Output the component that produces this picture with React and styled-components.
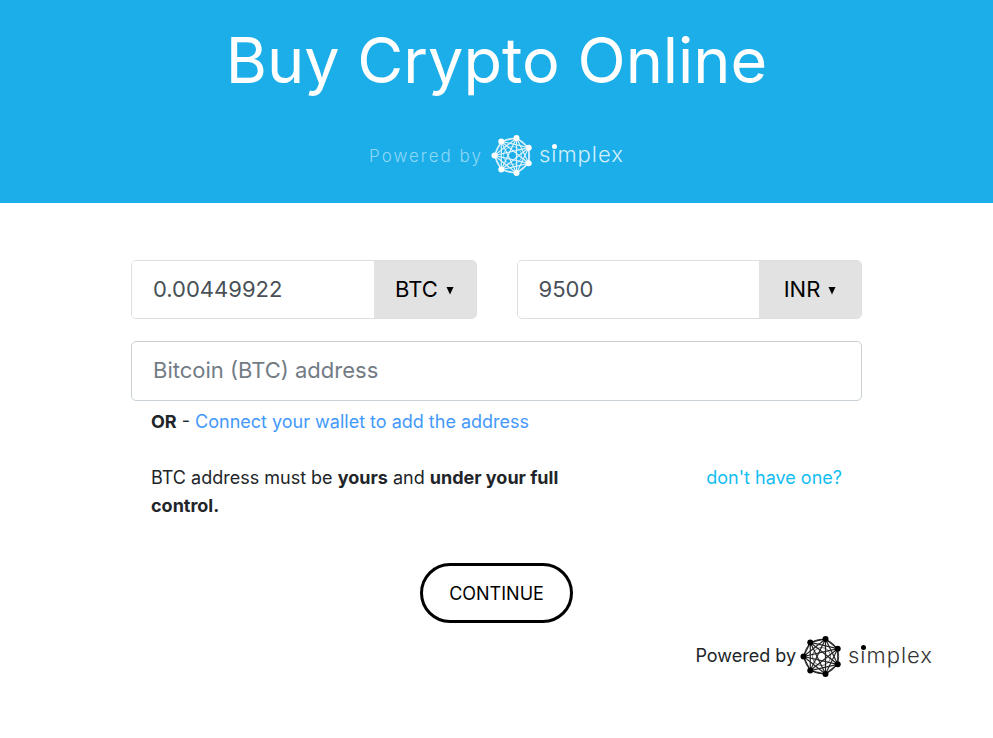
import React, { useState } from "react";
import styled, { createGlobalStyle } from "styled-components";

const GlobalStyle = createGlobalStyle`
  *, *::before, *::after { box-sizing: border-box; }
  body {
    margin: 0;
    background: #fff;
    color: #212529;
    font-family: Inter, "Liberation Sans", sans-serif;
    font-size: 18px;
    line-height: 28px;
  }
`;

const Header = styled.header`
  display: flex;
  flex-direction: column;
  align-items: center;
  gap: 32px;
  padding: 18px 20px 26px;
  background: #1caee9;
  color: #fff;
`;

const Title = styled.h1`
  margin: 0;
  font-size: 63px;
  font-weight: 400;
  line-height: 84px;
  text-align: center;
`;

const Powered = styled.div`
  display: flex;
  align-items: center;
  gap: 8px;
  color: #8ed8f6;
  font-size: 17px;
  font-weight: 300;
  letter-spacing: 2px;
`;

const FooterPowered = styled.footer`
  display: flex;
  align-items: center;
  justify-content: flex-end;
  gap: 4px;
  padding: 12px 60px 40px;
`;

const PoweredLabel = styled.span`
  padding-bottom: 2px;
`;

const Logo = styled.span`
  display: inline-flex;
  align-items: center;
  gap: 5px;
  color: ${(p) => (p.$light ? "#fff" : "#000")};
`;

const Mark = styled.svg`
  display: block;
  width: 43px;
  height: 43px;
`;

const Wordmark = styled.span`
  position: relative;
  padding-bottom: 4px;
  color: ${(p) => (p.$light ? "#d3f0fc" : "#333")};
  font-family: Inter, sans-serif;
  font-size: 22px;
  font-weight: 300;
  line-height: 28px;
  letter-spacing: 1px;

  &::before {
    content: "";
    position: absolute;
    top: 4px;
    left: 13px;
    width: 5px;
    height: 5px;
    border-radius: 50%;
    background: ${(p) => (p.$light ? "#fff" : "#000")};
  }
`;

const Form = styled.form`
  display: flex;
  flex-direction: column;
  max-width: 771px;
  margin: 0 auto;
  padding: 57px 20px 0;
`;

const Amounts = styled.div`
  display: grid;
  grid-template-columns: 1fr 1fr;
  gap: 40px;
  margin-bottom: 22px;
`;

const Group = styled.div`
  display: flex;
  height: 59px;
  overflow: hidden;
  border: 1px solid #dfdfdf;
  border-radius: 5px;
`;

const AmountInput = styled.input`
  flex: 1;
  min-width: 0;
  padding: 0 21px 2px;
  border: 0;
  background: #fff;
  color: #495057;
  font: 400 22px Inter, sans-serif;
`;

const Picker = styled.div`
  display: flex;
  flex: 0 0 102px;
  justify-content: center;
  background: #e2e2e2;
`;

const SelectWrap = styled.div`
  position: relative;
`;

const CurrencySelect = styled.select`
  field-sizing: content;
  height: 100%;
  padding: 0 16px 2px 0;
  border: 0;
  appearance: none;
  background: transparent;
  color: #000;
  font: 400 22px Inter, sans-serif;
`;

const Caret = styled.svg`
  position: absolute;
  top: 26px;
  right: 0;
  width: 8px;
  height: 8px;
  pointer-events: none;
`;

const AddressInput = styled.input`
  height: 60px;
  padding: 0 21px 2px;
  border: 1px solid #c8d0d6;
  border-radius: 5px;
  background: #fff;
  color: #495057;
  font: 400 22px Inter, sans-serif;

  &::placeholder { color: #737c85; opacity: 1; }
`;

const Connect = styled.p`
  margin: 7px 20px 28px;
`;

const TextLink = styled.a`
  color: ${(p) => (p.$cyan ? "#12bdf2" : "#4399fb")};
  text-decoration: none;
`;

const Notice = styled.div`
  display: flex;
  justify-content: space-between;
  gap: 40px;
  padding: 0 20px;
`;

const NoticeText = styled.p`
  flex: 0 1 440px;
  margin: 0;
`;

const Strong = styled.strong`
  font-weight: 700;
`;

const Continue = styled.button`
  align-self: center;
  height: 60px;
  margin-top: 43px;
  padding: 0 26px;
  border: 3px solid #000;
  border-radius: 30px;
  background: #fff;
  color: #000;
  font: 400 18px Inter, sans-serif;
`;

const nodes = Array.from({ length: 7 }, (_, i) => {
  const a = Math.PI + (i * 2 * Math.PI) / 7;
  return [21.5 + 18 * Math.cos(a), 21.5 + 18 * Math.sin(a)];
});

const chords = nodes.flatMap((a, i) => nodes.slice(i + 1).map((b) => [a, b]));

function SimplexLogo({ light }) {
  return (
    <Logo $light={light}>
      <Mark viewBox="0 0 43 43" aria-hidden="true">
        <g stroke="currentColor" strokeWidth="1.2" opacity="0.85">
          {chords.map(([a, b], i) => (
            <line key={i} x1={a[0]} y1={a[1]} x2={b[0]} y2={b[1]} />
          ))}
        </g>
        <circle cx="21.5" cy="21.5" r="17.2" fill="none" stroke="currentColor" strokeWidth="0.9" opacity="0.8" />
        <circle cx="21.5" cy="21.5" r="9" fill="none" stroke="currentColor" strokeWidth="0.8" opacity="0.7" />
        {nodes.map(([x, y], i) => (
          <circle key={i} cx={x} cy={y} r="3" fill="currentColor" />
        ))}
      </Mark>
      <Wordmark $light={light}>simplex</Wordmark>
    </Logo>
  );
}

function Amount({ label, initial, currencies }) {
  const [value, setValue] = useState(initial);
  return (
    <Group>
      <AmountInput aria-label={label} value={value} onChange={(e) => setValue(e.target.value)} />
      <Picker>
        <SelectWrap>
          <CurrencySelect aria-label={`${label} currency`} defaultValue={currencies[0]}>
            {currencies.map((c) => (
              <option key={c}>{c}</option>
            ))}
          </CurrencySelect>
          <Caret viewBox="0 0 8 8" aria-hidden="true">
            <path d="M0.5 0H7.5L4 7.5Z" fill="#000" />
          </Caret>
        </SelectWrap>
      </Picker>
    </Group>
  );
}

export default function App() {
  return (
    <>
      <GlobalStyle />
      <Header>
        <Title>Buy Crypto Online</Title>
        <Powered>
          <span>Powered by</span>
          <SimplexLogo light />
        </Powered>
      </Header>
      <main>
        <Form onSubmit={(e) => e.preventDefault()}>
          <Amounts>
            <Amount label="Crypto amount" initial="0.00449922" currencies={["BTC"]} />
            <Amount label="Fiat amount" initial="9500" currencies={["INR"]} />
          </Amounts>
          <AddressInput aria-label="Bitcoin (BTC) address" placeholder="Bitcoin (BTC) address" />
          <Connect>
            <Strong>OR</Strong> - <TextLink href="#connect">Connect your wallet to add the address</TextLink>
          </Connect>
          <Notice>
            <NoticeText>
              BTC address must be <Strong>yours</Strong> and <Strong>under your full control.</Strong>
            </NoticeText>
            <TextLink $cyan href="#wallet">don't have one?</TextLink>
          </Notice>
          <Continue type="submit">CONTINUE</Continue>
        </Form>
      </main>
      <FooterPowered>
        <PoweredLabel>Powered by</PoweredLabel>
        <SimplexLogo />
      </FooterPowered>
    </>
  );
}
